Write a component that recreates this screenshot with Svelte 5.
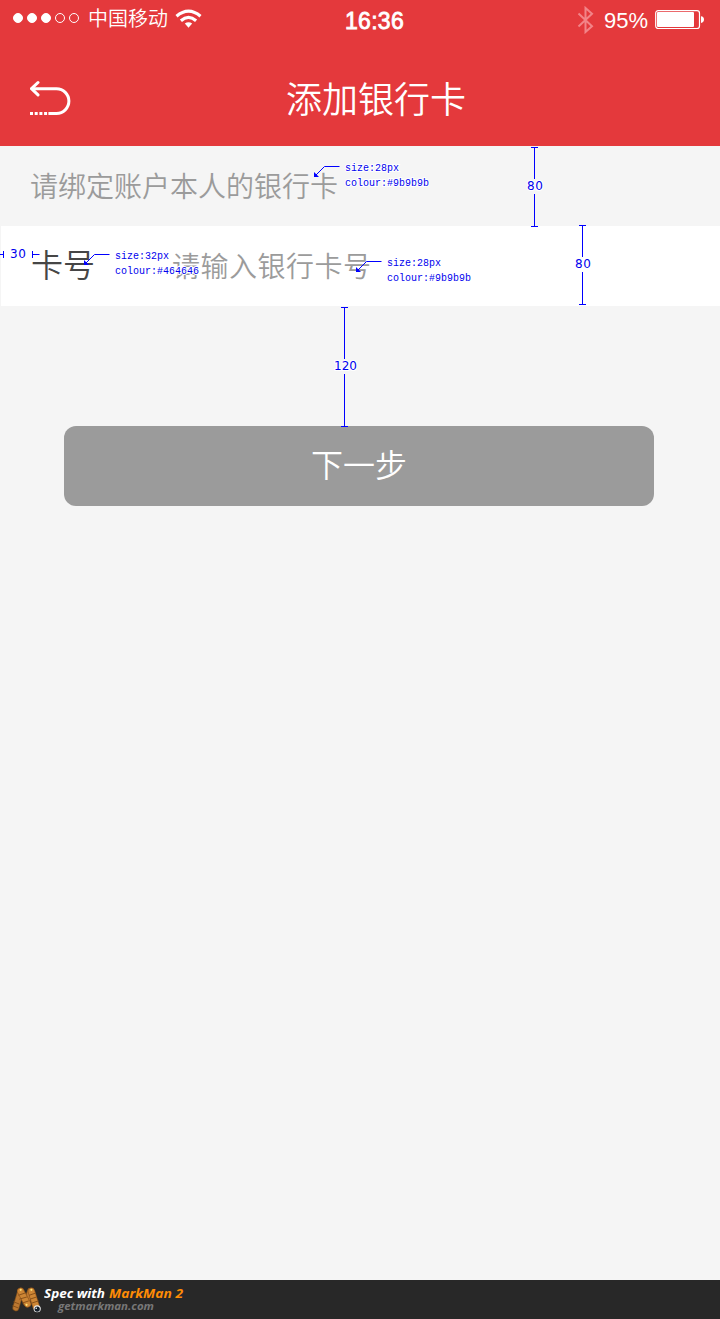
<script>
  const signal = [true, true, true, false, false];

  const rulers = [
    { x: 534.5, top: 147.5, bottom: 226.5, label: '80', mid: 186, tx: 527, w: 16 },
    { x: 582.5, top: 225.5, bottom: 304.5, label: '80', mid: 264, tx: 575, w: 16 },
    { x: 344.5, top: 307.5, bottom: 426.5, label: '120', mid: 366, tx: 334, w: 23 }
  ];

  const notes = [
    { x: 314, y: 177, size: 'size:28px', colour: 'colour:#9b9b9b' },
    { x: 84, y: 265, size: 'size:32px', colour: 'colour:#464646' },
    { x: 356, y: 272, size: 'size:28px', colour: 'colour:#9b9b9b' }
  ];
</script>

<div class="screen">
  <header>
    <div class="status">
      <div class="carrier">
        <span class="dots">
          {#each signal as on}<i class:on></i>{/each}
        </span>
        <span class="operator">中国移动</span>
        <svg class="wifi" width="27" height="20" viewBox="0 0 27 20">
          <g fill="none" stroke="#fff" stroke-width="3.2">
            <path d="M1.5 7.2Q13.5-3 25.5 7.2" />
            <path d="M5.9 11.7Q13.5 5.2 21.1 11.7" />
          </g>
          <path d="M9.8 14.5Q13.5 11.8 17.2 14.5L13.5 18.8Z" fill="#fff" />
        </svg>
      </div>
      <div class="time">16:36</div>
      <div class="power">
        <svg class="bluetooth" width="18" height="28" viewBox="0 0 18 28">
          <path d="M1.5 7.5L15 20.2L8.5 26V2L15 7.8L1.5 20.5" fill="none" stroke="#f28488" stroke-width="2" />
        </svg>
        <span class="percent">95%</span>
        <svg class="battery" width="50" height="20" viewBox="0 0 50 20">
          <rect x=".7" y=".7" width="43.8" height="17.8" rx="2.5" fill="none" stroke="#fff" stroke-width="1.2" />
          <rect x="2" y="2" width="37" height="15" rx="1" fill="#fff" />
          <path d="M46 6.2Q49 6.6 49 9.6T46 13Z" fill="#fff" />
        </svg>
      </div>
    </div>
    <div class="nav">
      <svg class="back" width="42" height="36" viewBox="0 0 42 36">
        <g fill="none" stroke="#fff" stroke-width="3">
          <path d="M8 2.5L1.5 8.7L8 14.9" stroke-linecap="round" stroke-linejoin="round" />
          <path d="M2 8.7H26.5A12.4 12.4 0 0 1 26.5 33.5H18.5" />
          <path d="M0 33.5H19" stroke-dasharray="3 1.7" />
        </g>
      </svg>
      <h1>添加银行卡</h1>
    </div>
  </header>

  <p class="hint">请绑定账户本人的银行卡</p>
  <div class="field">
    <span class="label">卡号</span>
    <span class="placeholder">请输入银行卡号</span>
  </div>
  <button>下一步</button>

  <footer>
    <svg class="logo" width="34" height="30" viewBox="0 0 34 30">
      <g stroke-linecap="round" stroke-linejoin="round" fill="none">
        <path d="M5 23L10 6M20 6L16 18" stroke="#85531d" stroke-width="7" />
        <path d="M5 23L10 6M20 6L16 18" stroke="#bc7831" stroke-width="5.4" />
        <path d="M10 6L17 19M21 6L26 22" stroke="#95591d" stroke-width="7.5" />
        <path d="M10 6L17 19M21 6L26 22" stroke="#cd8635" stroke-width="6" />
        <path d="M8 10L14 8M9 14L16 12M12 18L18 16M19 10L25 8M20 14L26 12M22 18L28 16M3 17L8 19M2 21L7 23" stroke="#865019" stroke-width="1" />
      </g>
      <circle cx="10" cy="4.5" r="1.1" fill="#ffe57a" />
      <circle cx="21" cy="4.5" r="1.1" fill="#ffe57a" />
      <circle cx="16" cy="20" r="1.1" fill="#ffe57a" />
      <circle cx="27" cy="24" r="3.7" fill="#eee" />
      <circle cx="27" cy="24.3" r="2.7" fill="#16202a" />
      <circle cx="26" cy="23.5" r=".8" fill="#fff" />
    </svg>
    <svg class="brand" width="150" height="39" viewBox="0 0 150 39">
      <text class="spec" x="0" y="18" textLength="61" lengthAdjust="spacingAndGlyphs">Spec with</text>
      <text class="product" x="65" y="18" textLength="74" lengthAdjust="spacingAndGlyphs">MarkMan 2</text>
      <text class="site" x="14" y="30" textLength="96" lengthAdjust="spacingAndGlyphs">getmarkman.com</text>
    </svg>
  </footer>

  <svg class="marks" width="720" height="440" viewBox="0 0 720 440">
    {#each rulers as r}
      <path d="M{r.x - 3.5} {r.top}h7M{r.x} {r.top}V{r.mid - 7}M{r.x} {r.mid + 8}V{r.bottom}M{r.x - 3.5} {r.bottom}h7" />
      <text class="num" x={r.tx} y={r.mid + 4} textLength={r.w}>{r.label}</text>
    {/each}
    <path d="M0 254.5H4M3.5 251V258M32.5 251V258M33 254.5H39.5" />
    <text class="num" x="10" y="258" textLength="16">30</text>
    {#each notes as n}
      <path d="M{n.x + 2} {n.y - 2}L{n.x + 10.5} {n.y - 10.5}H{n.x + 25.5}" />
      <path class="tip" d="M{n.x} {n.y}v-5l5 5z" />
      <text class="note" x={n.x + 31} y={n.y - 6} textLength="54">{n.size}</text>
      <text class="note" x={n.x + 31} y={n.y + 9} textLength="84">{n.colour}</text>
    {/each}
  </svg>
</div>

<style>
  :global(body) {
    margin: 0;
  }
  .screen {
    position: relative;
    display: flex;
    flex-direction: column;
    width: 720px;
    height: 1319px;
    background: #f5f5f5;
    font-family: "Noto Sans CJK SC", sans-serif;
    font-weight: 350;
  }
  header {
    height: 146px;
    background: #e4393c;
    color: #fff;
  }
  .status {
    display: grid;
    grid-template-columns: 1fr auto 1fr;
    height: 40px;
    box-sizing: border-box;
    padding: 0 15px 0 13px;
    align-items: center;
  }
  .carrier,
  .power {
    display: flex;
    align-items: center;
  }
  .dots {
    display: flex;
    gap: 4px;
    margin-top: -4px;
  }
  .dots i {
    width: 10px;
    height: 10px;
    box-sizing: border-box;
    border: 1px solid #fff;
    border-radius: 50%;
  }
  .dots i.on {
    background: #fff;
  }
  .operator {
    margin: -4px 7px 0 9px;
    font-size: 20px;
    line-height: 30px;
  }
  .wifi {
    margin-top: -3px;
  }
  .time {
    padding: 2px 0 0 31px;
    font: 400 23px/30px "Liberation Sans", sans-serif;
    letter-spacing: .3px;
    -webkit-text-stroke: .8px #fff;
  }
  .power {
    justify-content: flex-end;
  }
  .percent {
    margin: 1px 7px 0 9px;
    font: 400 22px/30px "Liberation Sans", sans-serif;
  }
  .nav {
    display: grid;
    grid-template-columns: 42px 1fr 42px;
    height: 106px;
    padding: 0 0 0 30px;
    box-sizing: border-box;
  }
  .back {
    margin-top: 40px;
  }
  h1 {
    margin: 31px 0 0;
    padding-left: 2px;
    text-align: center;
    font-size: 36px;
    line-height: 52px;
    font-weight: 350;
  }
  .hint {
    height: 80px;
    margin: 0;
    padding-left: 30px;
    color: #9b9b9b;
    font-size: 28px;
    line-height: 78px;
  }
  .field {
    display: flex;
    height: 80px;
    margin-left: 1px;
    padding-left: 30px;
    background: #fff;
    line-height: 80px;
  }
  .label {
    width: 141px;
    color: #464646;
    font-size: 32px;
    line-height: 75px;
  }
  .placeholder {
    color: #9b9b9b;
    font-size: 28px;
    letter-spacing: .5px;
    line-height: 79px;
  }
  button {
    width: 590px;
    height: 80px;
    margin: 120px 0 0 64px;
    padding: 0 0 6px;
    border: 0;
    border-radius: 12px;
    background: #9b9b9b;
    color: #fff;
    font: 350 32px/70px "Noto Sans CJK SC", sans-serif;
  }
  footer {
    display: flex;
    height: 39px;
    margin-top: auto;
    background: #282828;
  }
  .logo {
    margin: 5px 0 0 11px;
    width: 33px;
  }
  .brand text {
    font: italic 700 13px "Open Sans", sans-serif;
  }
  .brand .spec {
    fill: #fff;
  }
  .brand .product {
    fill: #ff8c05;
  }
  .brand .site {
    fill: #777;
    font-size: 11px;
  }
  .marks {
    position: absolute;
    top: 0;
    left: 0;
    pointer-events: none;
  }
  .marks path {
    fill: none;
    stroke: #00f;
  }
  .marks .tip {
    fill: #00f;
    stroke: none;
  }
  .marks text {
    fill: #00e;
    stroke: #fff;
    stroke-width: 2px;
    paint-order: stroke;
  }
  .num {
    font: 400 12px "DejaVu Sans", sans-serif;
  }
  .note {
    font: 400 10px "Liberation Mono", monospace;
  }
</style>
